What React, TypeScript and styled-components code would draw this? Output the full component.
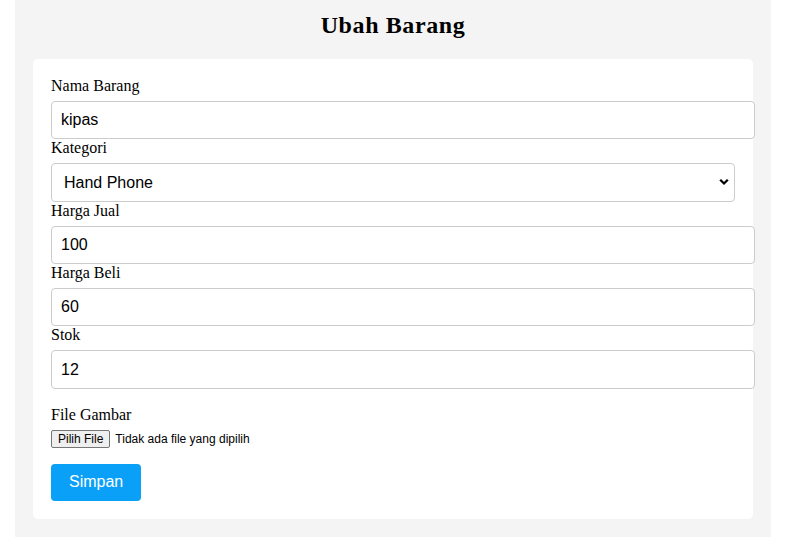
import React from "react";
import styled, { createGlobalStyle } from "styled-components";

const GlobalStyle = createGlobalStyle`
  html, body {
    margin: 0;
    padding: 0;
    background: #ffffff;
  }
  body {
    font-family: "Liberation Serif", "Times New Roman", serif;
    color: #000;
  }
`;

const Page = styled.div`
  padding-left: 15px;
`;

const Panel = styled.div`
  width: 720px;
  padding: 11px 18px 18px;
  background: #f4f4f4;
`;

const Title = styled.h2`
  margin: 0 0 19.92px;
  text-align: center;
  font-family: "Liberation Serif", "Times New Roman", serif;
  font-size: 24px;
  font-weight: 700;
  line-height: 28px;
  letter-spacing: 0.6px;
  color: #000;
`;

const Card = styled.form`
  background: #ffffff;
  border-radius: 5px;
  padding: 18px;
`;

const Field = styled.div<{ $gapTop?: number }>`
  margin-top: ${(p) => p.$gapTop ?? 0}px;
`;

const Label = styled.label`
  display: block;
  font-family: "Liberation Serif", "Times New Roman", serif;
  font-size: 16px;
  line-height: 18px;
  margin-bottom: 6px;
`;

const TextInput = styled.input`
  display: block;
  width: 100%;
  height: 18.4px;
  box-sizing: content-box;
  margin: 0;
  padding: 9px;
  border: 1px solid #cccccc;
  border-radius: 4px;
  font-family: "Liberation Sans", Arial, sans-serif;
  font-size: 16px;
  line-height: 18.4px;
  color: #000;
  background: #fff;
  outline: none;
`;

const SelectWrap = styled.div`
  position: relative;
  width: 100%;
`;

const Select = styled.select`
  display: block;
  width: 100%;
  height: 38.4px;
  box-sizing: border-box;
  margin: 0;
  padding: 0 30px 0 12px;
  border: 1px solid #cccccc;
  border-radius: 4px;
  font-family: "Liberation Sans", Arial, sans-serif;
  font-size: 16px;
  color: #000;
  background: #fff;
  appearance: none;
  -webkit-appearance: none;
  outline: none;
`;

const Chevron = styled.svg`
  position: absolute;
  right: 6px;
  top: 50%;
  transform: translateY(-50%);
  pointer-events: none;
`;

const FileRow = styled.div`
  display: flex;
  align-items: center;
  gap: 5px;
  font-family: "Liberation Sans", Arial, sans-serif;
  font-size: 12px;
`;

const FileButton = styled.span`
  display: inline-block;
  padding: 1px 6px;
  border: 1px solid #767676;
  border-radius: 2px;
  background: #efefef;
  color: #000;
  line-height: normal;
`;

const FileText = styled.span`
  color: #000;
  line-height: normal;
`;

const SubmitButton = styled.button`
  display: block;
  margin-top: 16.5px;
  padding: 9px 18px;
  border: none;
  border-radius: 4px;
  background: #0ba0f7;
  color: #ffffff;
  font-family: "Liberation Sans", Arial, sans-serif;
  font-size: 16px;
  line-height: 18.4px;
  cursor: pointer;
`;

const fields = [
  { label: "Harga Jual", value: "100" },
  { label: "Harga Beli", value: "60" },
  { label: "Stok", value: "12" },
];

export default function App() {
  return (
    <>
      <GlobalStyle />
      <Page>
        <Panel>
          <Title>Ubah Barang</Title>
          <Card onSubmit={(e) => e.preventDefault()}>
            <Field>
              <Label>Nama Barang</Label>
              <TextInput type="text" defaultValue="kipas" />
            </Field>
            <Field>
              <Label>Kategori</Label>
              <SelectWrap>
                <Select defaultValue="hp">
                  <option value="hp">Hand Phone</option>
                  <option value="el">Elektronik</option>
                </Select>
                <Chevron width="10" height="7" viewBox="0 0 10 7">
                  <polyline
                    points="1.2,1.3 5,5 8.8,1.3"
                    fill="none"
                    stroke="#000"
                    strokeWidth="2.3"
                  />
                </Chevron>
              </SelectWrap>
            </Field>
            {fields.map((f) => (
              <Field key={f.label}>
                <Label>{f.label}</Label>
                <TextInput type="text" defaultValue={f.value} />
              </Field>
            ))}
            <Field $gapTop={17}>
              <Label>File Gambar</Label>
              <FileRow>
                <FileButton>Pilih File</FileButton>
                <FileText>Tidak ada file yang dipilih</FileText>
              </FileRow>
            </Field>
            <SubmitButton type="submit">Simpan</SubmitButton>
          </Card>
        </Panel>
      </Page>
    </>
  );
}
